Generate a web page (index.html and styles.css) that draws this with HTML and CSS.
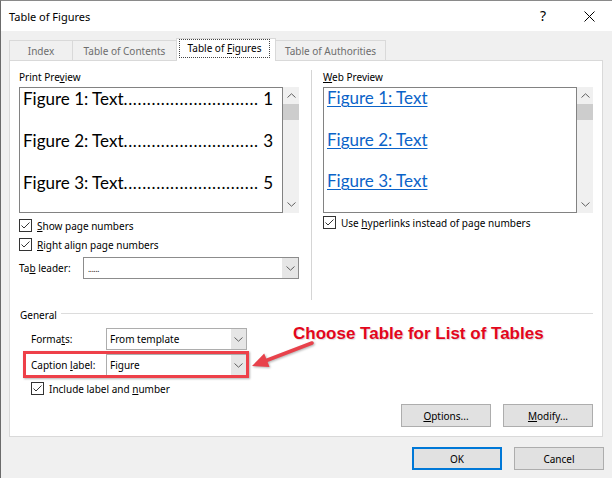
FILE: index.html
```html
<!DOCTYPE html>
<html>
<head>
<meta charset="utf-8">
<title>Table of Figures</title>
<link rel="stylesheet" href="styles.css">
</head>
<body>
<div class="window">
  <header class="titlebar">
    <span class="title">Table of Figures</span>
    <div class="caption-btns">
      <span class="help">?</span>
      <span class="close"><svg width="11" height="11" viewBox="0 0 11 11"><path d="M0.5 0.5 L10.5 10.5 M10.5 0.5 L0.5 10.5" stroke="#000" stroke-width="1" fill="none"/></svg></span>
    </div>
  </header>
  <div class="client">
    <nav class="tabs">
      <div class="tab t-index">Index</div>
      <div class="tab t-toc">Table of Contents</div>
      <div class="tab t-tof active"><span class="focus">Table of <u>F</u>igures</span></div>
      <div class="tab t-toa">Table of Authorities</div>
    </nav>
    <section class="panel">
      <div class="previews">
        <div class="col col-print">
          <div class="label">Print Pre<u>v</u>iew</div>
          <div class="listwrap">
            <div class="listbox print">
              <div class="entry"><span>Figure 1: Text</span><span class="leader">.............................</span><span class="pg">1</span></div>
              <div class="entry"><span>Figure 2: Text</span><span class="leader">.............................</span><span class="pg">3</span></div>
              <div class="entry"><span>Figure 3: Text</span><span class="leader">.............................</span><span class="pg">5</span></div>
            </div>
            <div class="vscroll">
              <div class="sb-arrow"><svg width="9" height="5" viewBox="0 0 9 5"><path d="M0.5 4.5 L4.5 0.8 L8.5 4.5" fill="none" stroke="#606060"/></svg></div>
              <div class="sb-thumb"></div>
              <div class="sb-track"></div>
              <div class="sb-arrow"><svg width="9" height="5" viewBox="0 0 9 5"><path d="M0.5 0.5 L4.5 4.2 L8.5 0.5" fill="none" stroke="#606060"/></svg></div>
            </div>
          </div>
          <div class="check first">
            <svg width="13" height="13" viewBox="0 0 13 13"><rect x="0.5" y="0.5" width="12" height="12" fill="#fff" stroke="#333"/><path d="M2.5 6.5 L5 9 L10.5 3.5" fill="none" stroke="#333"/></svg>
            <span><u>S</u>how page numbers</span>
          </div>
          <div class="check">
            <svg width="13" height="13" viewBox="0 0 13 13"><rect x="0.5" y="0.5" width="12" height="12" fill="#fff" stroke="#333"/><path d="M2.5 6.5 L5 9 L10.5 3.5" fill="none" stroke="#333"/></svg>
            <span><u>R</u>ight align page numbers</span>
          </div>
          <div class="field">
            <span class="flabel">Ta<u>b</u> leader:</span>
            <div class="select leader-select">
              <span class="val dots">......</span>
              <span class="dd"><svg width="9" height="5" viewBox="0 0 9 5"><path d="M0.5 0.5 L4.5 4.2 L8.5 0.5" fill="none" stroke="#606060"/></svg></span>
            </div>
          </div>
        </div>
        <div class="vdivider"></div>
        <div class="col col-web">
          <div class="label"><u>W</u>eb Preview</div>
          <div class="listwrap">
            <div class="listbox web">
              <div class="entry link">Figure 1: Text</div>
              <div class="entry link">Figure 2: Text</div>
              <div class="entry link">Figure 3: Text</div>
            </div>
            <div class="vscroll">
              <div class="sb-arrow"><svg width="9" height="5" viewBox="0 0 9 5"><path d="M0.5 4.5 L4.5 0.8 L8.5 4.5" fill="none" stroke="#606060"/></svg></div>
              <div class="sb-thumb"></div>
              <div class="sb-track"></div>
              <div class="sb-arrow"><svg width="9" height="5" viewBox="0 0 9 5"><path d="M0.5 0.5 L4.5 4.2 L8.5 0.5" fill="none" stroke="#606060"/></svg></div>
            </div>
          </div>
          <div class="check">
            <svg width="13" height="13" viewBox="0 0 13 13"><rect x="0.5" y="0.5" width="12" height="12" fill="#fff" stroke="#333"/><path d="M2.5 6.5 L5 9 L10.5 3.5" fill="none" stroke="#333"/></svg>
            <span>Use <u>h</u>yperlinks instead of page numbers</span>
          </div>
        </div>
      </div>
      <div class="general">
        <div class="group-head"><span>General</span><span class="rule"></span></div>
        <div class="grow first">
          <span class="glabel">Forma<u>t</u>s:</span>
          <div class="select narrow">
            <span class="val">From template</span>
            <span class="dd"><svg width="9" height="5" viewBox="0 0 9 5"><path d="M0.5 0.5 L4.5 4.2 L8.5 0.5" fill="none" stroke="#606060"/></svg></span>
          </div>
        </div>
        <div class="grow">
          <span class="glabel">Caption <u>l</u>abel:</span>
          <div class="select narrow">
            <span class="val">Figure</span>
            <span class="dd"><svg width="9" height="5" viewBox="0 0 9 5"><path d="M0.5 0.5 L4.5 4.2 L8.5 0.5" fill="none" stroke="#606060"/></svg></span>
          </div>
        </div>
        <div class="check include">
          <svg width="13" height="13" viewBox="0 0 13 13"><rect x="0.5" y="0.5" width="12" height="12" fill="#fff" stroke="#333"/><path d="M2.5 6.5 L5 9 L10.5 3.5" fill="none" stroke="#333"/></svg>
          <span>Include label and <u>n</u>umber</span>
        </div>
      </div>
      <div class="panel-actions">
        <button class="btn"><u>O</u>ptions...</button>
        <button class="btn"><u>M</u>odify...</button>
      </div>
    </section>
    <div class="dialog-actions">
      <button class="btn default">OK</button>
      <button class="btn">Cancel</button>
    </div>
  </div>

  <div class="callout-box"></div>
  <svg class="callout-arrow" width="72" height="40" viewBox="0 0 72 40">
    <path d="M64 8 L17 26" stroke="#e8424b" stroke-width="3.5" stroke-linecap="round" fill="none"/>
    <path d="M4 31 L21.6 32 L16.2 18.6 Z" fill="#e8424b"/>
  </svg>
  <div class="callout-text">Choose Table for List of Tables</div>
</div>
</body>
</html>
```

FILE: styles.css
```css
body {
  margin: 0;
  background: #f0f0f0;
  font-family: "Noto Sans", sans-serif;
  font-size: 10px;
  color: #000;
}

.window {
  position: relative;
  width: 612px;
  height: 478px;
  box-sizing: border-box;
  border-left: 1px solid #6b6b6b;
  border-top: 1px solid #8a8a8a;
  background: #f0f0f0;
  overflow: hidden;
}

u { text-decoration: underline; text-underline-offset: 1px; }

/* Title bar */
.titlebar {
  height: 30px;
  background: #fff;
  display: flex;
  align-items: center;
  padding-left: 8px;
}
.title { font-size: 11px; }
.caption-btns {
  margin-left: auto;
  display: flex;
  align-items: center;
  height: 30px;
}
.help {
  width: 46px;
  text-align: center;
  font-size: 14px;
  line-height: 30px;
}
.close {
  width: 46px;
  display: flex;
  justify-content: center;
  align-items: center;
}

/* Client area */
.client { padding: 7px 9px 0 8px; }

.tabs {
  display: flex;
  align-items: flex-end;
  height: 22px;
}
.tab {
  box-sizing: border-box;
  height: 20px;
  border: 1px solid #d9d9d9;
  border-bottom: none;
  margin-left: -1px;
  display: flex;
  align-items: center;
  justify-content: center;
  color: #6d6d6d;
  background: #f0f0f0;
}
.tab:first-child { margin-left: 0; }
.t-index { width: 64px; }
.t-toc { width: 105px; }
.t-tof { width: 100px; }
.t-toa { width: 111px; }
.tab.active {
  height: 23px;
  margin-bottom: -1px;
  background: #fff;
  color: #000;
  position: relative;
  z-index: 1;
  padding: 0 5px 3px 2px;
  align-items: stretch;
}
.focus {
  flex: 1;
  border: 1px dotted #444;
  display: block;
  text-align: center;
  line-height: 17px;
  white-space: nowrap;
}

/* Panel */
.panel {
  background: #fff;
  border: 1px solid #d9d9d9;
  padding: 8px 9px 9px 9px;
}
.previews {
  display: flex;
  align-items: flex-start;
}
.col-print { width: 280px; }
.col-web { width: 270px; margin-left: 11px; }
.vdivider {
  width: 1px;
  height: 230px;
  margin: 1px 0 0 12px;
  background: #d5d5d5;
}

.label { line-height: 16px; margin-bottom: 2px; }

.listwrap { display: flex; height: 126px; }
.listbox {
  flex: 1;
  box-sizing: border-box;
  border: 1px solid #828282;
  background: #fff;
  overflow: hidden;
}
.vscroll {
  width: 16px;
  background: #f0f0f0;
  display: flex;
  flex-direction: column;
}
.sb-arrow {
  height: 17px;
  display: flex;
  align-items: center;
  justify-content: center;
}
.sb-thumb { height: 16px; background: #cdcdcd; }
.sb-track { flex: 1; }

.entry {
  font-family: "Lato", sans-serif;
  font-size: 17px;
  white-space: nowrap;
}
.print .entry {
  display: flex;
  line-height: 21px;
  margin-bottom: 21px;
  padding: 0 9px 0 3px;
}
.leader { letter-spacing: 0.65px; }
.pg { margin-left: auto; padding-left: 4px; }
.web .entry {
  color: #0b63c8;
  text-decoration: underline;
  text-decoration-thickness: 1px;
  text-underline-offset: 2px;
  line-height: 20px;
  margin-bottom: 21.5px;
  padding-left: 3px;
}

.check {
  display: flex;
  align-items: center;
  gap: 5px;
  height: 19px;
}
.check svg { flex: none; }
.check.first { margin-top: 3px; }

.field {
  display: flex;
  align-items: center;
  height: 22px;
  margin-top: 3px;
}
.flabel { width: 64px; }

.select {
  box-sizing: border-box;
  height: 22px;
  border: 1px solid #adadad;
  display: flex;
  align-items: center;
  background: #fff;
}
.leader-select { width: 216px; border-color: #8c8c8c; }
.select .val { flex: 1; padding-left: 3px; }
.select .dots { padding-left: 4px; font-size: 8px; letter-spacing: -0.3px; }
.select .dd {
  width: 16px;
  align-self: stretch;
  background: #e6e6e6;
  display: flex;
  align-items: center;
  justify-content: center;
}

/* General */
.general { margin-top: 7px; }
.group-head {
  display: flex;
  align-items: flex-start;
  line-height: 16px;
  padding-left: 1px;
}
.group-head .rule {
  flex: 1;
  height: 1px;
  background: #dcdcdc;
  margin: 6px 0 0 4px;
}
.grow {
  display: flex;
  align-items: center;
  height: 22px;
  padding-left: 12px;
  margin-top: 4px;
}
.grow.first { margin-top: 5px; }
.glabel { width: 75px; }
.select.narrow { width: 141px; }
.select.narrow .dd { width: 15px; }
.check.include { padding-left: 12px; margin-top: 3px; }

/* Buttons */
.panel-actions {
  display: flex;
  justify-content: flex-end;
  gap: 12px;
  margin-top: 6px;
}
.dialog-actions {
  display: flex;
  justify-content: flex-end;
  gap: 12px;
  margin: 10px -1px 0 0;
}
.btn {
  box-sizing: border-box;
  width: 90px;
  height: 23px;
  background: #e1e1e1;
  border: 1px solid #adadad;
  font: inherit;
  color: #000;
  padding: 0;
}
.btn.default { border: 2px solid #0078d7; }

/* Annotation overlay */
.callout-box {
  position: absolute;
  left: 22px;
  top: 350px;
  width: 226px;
  height: 27px;
  box-sizing: border-box;
  border: 3px solid #ee4049;
  box-shadow: 1px 1px 2px rgba(0, 0, 0, 0.3);
}
.callout-arrow {
  position: absolute;
  left: 247px;
  top: 334px;
  filter: drop-shadow(1px 1px 1px rgba(0, 0, 0, 0.3));
}
.callout-text {
  position: absolute;
  left: 292px;
  top: 323px;
  font-family: "Liberation Sans", Arial, sans-serif;
  font-weight: bold;
  font-size: 17px;
  line-height: 20px;
  color: #e3061c;
  white-space: nowrap;
  text-shadow: 1px 1px 1px rgba(0, 0, 0, 0.15);
}
```
